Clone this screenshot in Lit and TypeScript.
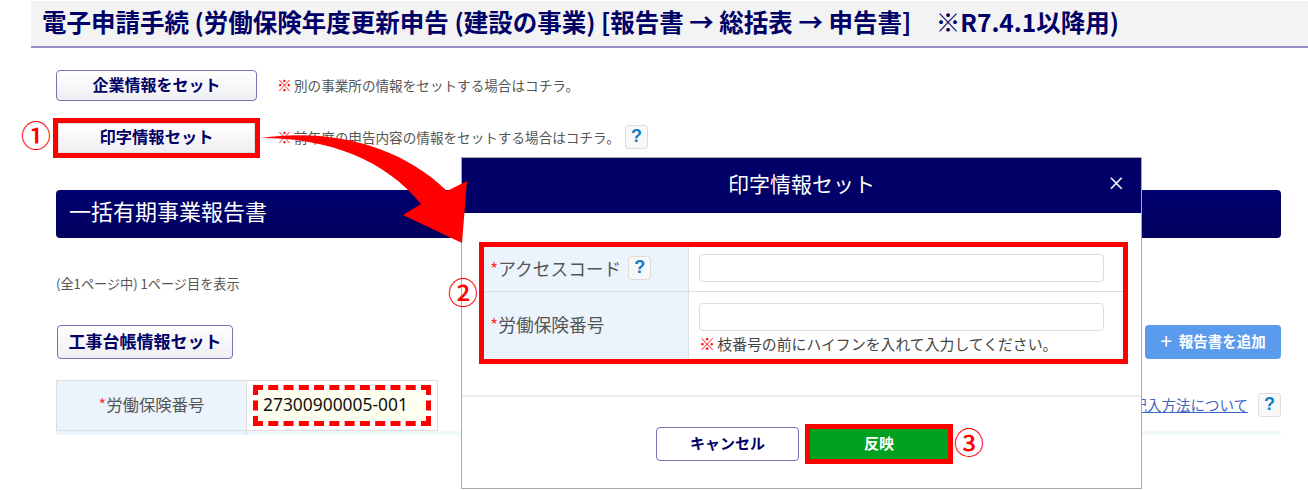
/**
 * Recreation of the labour insurance application screen with its help modal
 */

import { LitElement, html, css } from 'lit'
import { customElement } from 'lit/decorators.js'

const helpButton = html`<span class="help">?</span>`

@customElement('app-root')
export class AppRoot extends LitElement {
  static styles = css`
    :host {
      display: block;
      position: relative;
      width: 1308px;
      height: 490px;
      overflow: hidden;
      background: #fff;
      font-family: 'Noto Sans CJK JP', 'Noto Sans', sans-serif;
      color: #444;
    }

    .title {
      box-sizing: border-box;
      margin: 1px 0 0 31px;
      height: 47px;
      padding: 0 0 4px 11px;
      display: flex;
      align-items: center;
      background: #f3f3f3;
      border-bottom: 2px solid #9491c4;
      font-size: 24.5px;
      font-weight: 700;
      color: #000066;
      white-space: pre;
    }

    .content {
      padding: 22px 27px 0 56px;
    }

    .action-row {
      display: flex;
      align-items: center;
      height: 31px;
    }

    .action-row + .action-row {
      margin-top: 21px;
    }

    .btn {
      box-sizing: border-box;
      display: flex;
      align-items: center;
      justify-content: center;
      padding-bottom: 3px;
      border: 1px solid #7673b0;
      border-radius: 4px;
      background: linear-gradient(#ffffff, #efeff2);
      color: #000066;
      font-weight: 700;
      font-size: 16px;
    }

    .btn-wide {
      width: 201px;
      height: 31px;
      flex: none;
    }

    .btn-marked {
      width: 197px;
      height: 30px;
      margin-left: 2px;
      margin-right: 2px;
      outline: 5px solid #ff0000;
      border-color: #ddd;
      border-radius: 0;
      font-size: 16.3px;
    }

    .note {
      margin-left: 20px;
      padding-bottom: 2px;
      font-size: 13.6px;
      color: #555;
      display: flex;
      align-items: center;
      white-space: nowrap;
    }

    .mark {
      color: #ff0000;
      font-weight: 700;
      font-size: 1.1em;
      margin-right: 2px;
    }

    .help {
      box-sizing: border-box;
      display: inline-flex;
      align-items: center;
      justify-content: center;
      width: 23px;
      height: 24px;
      border: 1px solid #ddd;
      border-radius: 3px;
      background: #f8f8f8;
      color: #0f7dc8;
      font-size: 18px;
      font-weight: 700;
      font-family: 'Liberation Sans', sans-serif;
    }

    .note .help {
      margin-left: 5px;
    }

    .band {
      box-sizing: border-box;
      margin-top: 37px;
      height: 48px;
      padding: 0 0 8px 13px;
      display: flex;
      align-items: center;
      border-radius: 4px;
      background: linear-gradient(#000070, #00005c);
      color: #fff;
      font-size: 22px;
    }

    .pages {
      margin-top: 37px;
      height: 18px;
      line-height: 18px;
      font-size: 13.15px;
      color: #555;
    }

    .tools {
      margin-top: 32px;
      display: flex;
      justify-content: space-between;
      height: 34px;
    }

    .btn-ledger {
      width: 176px;
      margin-left: 1px;
      font-size: 17px;
    }

    .btn-add {
      box-sizing: border-box;
      width: 136px;
      padding-bottom: 3px;
      display: flex;
      align-items: center;
      justify-content: center;
      gap: 7px;
      border-radius: 4px;
      background: #5a9bee;
      color: #fff;
      font-size: 14.5px;
      font-weight: 700;
    }

    .btn-add .plus {
      font-size: 21px;
      font-weight: 400;
      line-height: 1;
    }

    .sheet {
      margin-top: 21px;
      height: 55px;
      overflow: hidden;
    }

    .sheet-row {
      display: flex;
      height: 51px;
    }

    .sheet-head {
      box-sizing: border-box;
      width: 191px;
      padding-bottom: 3px;
      display: flex;
      align-items: center;
      justify-content: center;
      background: #ebf4fc;
      border: 1px solid #ddd;
      font-size: 16.4px;
      color: #555;
    }

    .req {
      color: #ff3030;
    }

    .sheet-value {
      box-sizing: border-box;
      width: 191px;
      padding: 9px 11px 9px;
      border: 1px solid #ddd;
      border-left: 0;
    }

    .filled {
      box-sizing: border-box;
      height: 31px;
      padding: 0 0 3px 5px;
      display: flex;
      align-items: center;
      background: #fffff0;
      outline: 5px dashed #ff0000;
      color: #111;
      font-size: 17.4px;
      font-family: 'Noto Sans', sans-serif;
    }

    .sheet-link {
      flex: 1;
      padding-bottom: 2px;
      display: flex;
      align-items: center;
      justify-content: flex-end;
      gap: 10px;
    }

    .sheet-link a {
      color: #3b67c4;
      text-decoration: underline;
      font-size: 14.5px;
    }

    .sheet-next {
      height: 4px;
      display: flex;
      background: #f1f8fc;
    }

    .sheet-next span {
      width: 190px;
      background: #ebf4fc;
      border-right: 1px solid #ddd;
    }

    .modal {
      position: absolute;
      left: 461px;
      top: 157px;
      box-sizing: border-box;
      width: 681px;
      height: 332px;
      background: #fff;
      border: 1px solid #aaa;
      display: flex;
      flex-direction: column;
    }

    .modal-head {
      height: 55px;
      padding-bottom: 6px;
      box-sizing: border-box;
      flex: none;
      display: flex;
      align-items: center;
      justify-content: center;
      position: relative;
      background: #000066;
      color: #fff;
      font-size: 21px;
    }

    .close {
      position: absolute;
      right: 17px;
      top: 12px;
      font-size: 27px;
      font-weight: 300;
      line-height: 26px;
      font-family: 'Noto Sans', sans-serif;
    }

    .form {
      margin: 34px 18px 0 22px;
      width: 639px;
      height: 112px;
      display: grid;
      grid-template-columns: 205px 1fr;
      grid-template-rows: 44px 1fr;
      outline: 5px solid #ff0000;
      flex: none;
    }

    .form-label {
      display: flex;
      align-items: center;
      gap: 7px;
      padding: 0 0 3px 6px;
      background: #ebf4fc;
      border-right: 1px solid #d8e0e8;
      font-size: 17.7px;
      color: #555;
    }

    .form-value {
      padding: 7px 24px 0 10px;
    }

    .row-2 {
      border-top: 1px solid #ddd;
    }

    .form-value.row-2 {
      padding: 11px 24px 0 10px;
    }

    .field {
      box-sizing: border-box;
      height: 28px;
      width: 405px;
      border: 1px solid #ddd;
      border-radius: 4px;
      background: #fff;
    }

    .hint {
      margin-top: 2px;
      font-size: 14.85px;
      line-height: 20px;
      color: #444;
      white-space: nowrap;
    }

    .modal-foot {
      margin-top: 36px;
      flex: 1;
      border-top: 2px solid #eee;
      display: flex;
      gap: 11px;
      padding: 30px 0 0 194px;
    }

    .btn-cancel {
      width: 143px;
      height: 34px;
      background: #fff;
      font-size: 15px;
    }

    .btn-apply {
      box-sizing: border-box;
      width: 138px;
      height: 30px;
      margin-top: 2px;
      padding-bottom: 3px;
      display: flex;
      align-items: center;
      justify-content: center;
      background: #00a020;
      outline: 5px solid #ff0000;
      color: #fff;
      font-size: 15px;
      font-weight: 700;
    }

    .step {
      position: absolute;
      color: #ff0000;
      font-size: 30px;
      font-weight: 500;
      line-height: 36px;
    }

    .step-1 {
      left: 21px;
      top: 116px;
    }

    .step-2 {
      left: 448px;
      top: 273px;
    }

    .step-3 {
      left: 954px;
      top: 423px;
    }

    .arrow {
      position: absolute;
      left: 0;
      top: 0;
      pointer-events: none;
    }
  `

  render() {
    return html`
      <div class="title">電子申請手続 (労働保険年度更新申告 (建設の事業) [報告書 → 総括表 → 申告書]　※R7.4.1以降用)</div>

      <div class="content">
        <div class="action-row">
          <div class="btn btn-wide">企業情報をセット</div>
          <div class="note"><span class="mark">※</span>別の事業所の情報をセットする場合はコチラ。</div>
        </div>
        <div class="action-row">
          <div class="btn btn-marked">印字情報セット</div>
          <div class="note"><span class="mark">※</span>前年度の申告内容の情報をセットする場合はコチラ。${helpButton}</div>
        </div>

        <div class="band">一括有期事業報告書</div>
        <div class="pages">(全1ページ中) 1ページ目を表示</div>

        <div class="tools">
          <div class="btn btn-ledger">工事台帳情報セット</div>
          <div class="btn-add"><span class="plus">+</span>報告書を追加</div>
        </div>

        <div class="sheet">
          <div class="sheet-row">
            <div class="sheet-head"><span class="req">*</span>労働保険番号</div>
            <div class="sheet-value"><div class="filled">27300900005-001</div></div>
            <div class="sheet-link"><a>記入方法について</a>${helpButton}</div>
          </div>
          <div class="sheet-next"><span></span></div>
        </div>
      </div>

      <div class="modal">
        <div class="modal-head">印字情報セット<span class="close">×</span></div>
        <div class="form">
          <div class="form-label"><span><span class="req">*</span>アクセスコード</span>${helpButton}</div>
          <div class="form-value"><div class="field"></div></div>
          <div class="form-label row-2"><span><span class="req">*</span>労働保険番号</span></div>
          <div class="form-value row-2">
            <div class="field"></div>
            <div class="hint"><span class="mark">※</span>枝番号の前にハイフンを入れて入力してください。</div>
          </div>
        </div>
        <div class="modal-foot">
          <div class="btn btn-cancel">キャンセル</div>
          <div class="btn-apply">反映</div>
        </div>
      </div>

      <svg class="arrow" width="1308" height="490" viewBox="0 0 1308 490">
        <path fill="#ff0000" d="M261 138 C330 128 400 145 447 191 L467 181 L462 243 L403 215 L421 204 C385 160 330 138 261 138 Z"></path>
      </svg>
      <span class="step step-1">①</span>
      <span class="step step-2">②</span>
      <span class="step step-3">③</span>
    `
  }
}

declare global {
  interface HTMLElementTagNameMap {
    'app-root': AppRoot
  }
}
